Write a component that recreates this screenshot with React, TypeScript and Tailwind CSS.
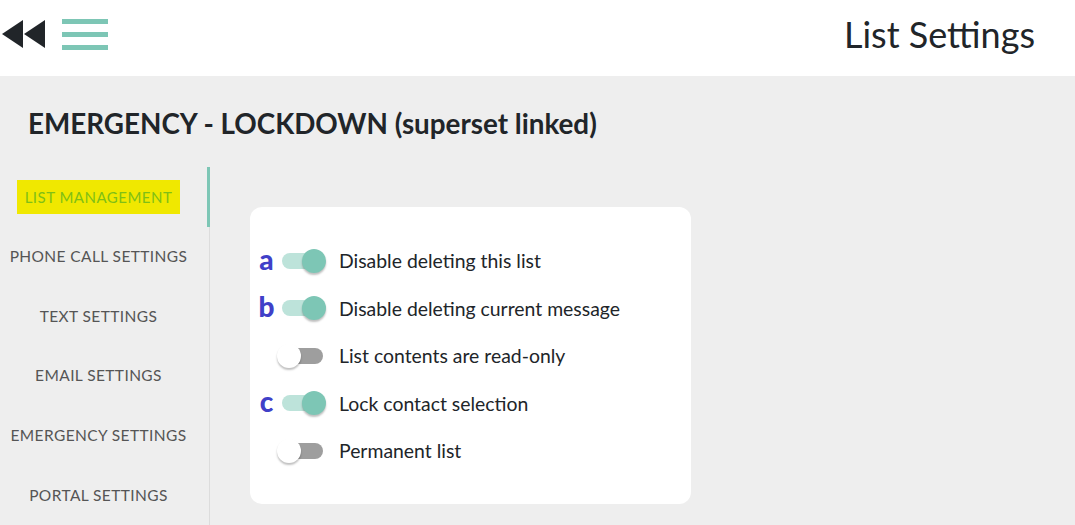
import React from "react";

const font = { fontFamily: "Lato, 'Noto Sans', sans-serif" };

function Switch({ on }: { on: boolean }) {
  return (
    <div className="relative w-[50px] h-[24px] shrink-0">
      <div
        className={
          "absolute left-[5px] top-[4px] w-[41px] h-[16px] rounded-full " +
          (on ? "bg-[#bde3da]" : "bg-[#9e9e9e]")
        }
      />
      <div
        className={
          "absolute top-0 w-[24px] h-[24px] rounded-full shadow-[0_2px_2px_rgba(0,0,0,0.25)] " +
          (on ? "left-[25px] bg-[#7dc6b5]" : "left-0 bg-white")
        }
      />
    </div>
  );
}

const rows: { letter: string; on: boolean; label: string }[] = [
  { letter: "a", on: true, label: "Disable deleting this list" },
  { letter: "b", on: true, label: "Disable deleting current message" },
  { letter: "", on: false, label: "List contents are read-only" },
  { letter: "c", on: true, label: "Lock contact selection" },
  { letter: "", on: false, label: "Permanent list" },
];

const nav = [
  "PHONE CALL SETTINGS",
  "TEXT SETTINGS",
  "EMAIL SETTINGS",
  "EMERGENCY SETTINGS",
  "PORTAL SETTINGS",
];

export default function App() {
  return (
    <div className="w-[1075px] h-[525px] overflow-hidden bg-[#eeeeee] flex flex-col" style={font}>
      <header className="h-[76px] bg-white flex items-center justify-between pl-[2px] pr-[40px] pb-[8px] shrink-0">
        <div className="flex items-center gap-[17px]">
          <svg width="43" height="28" viewBox="0 0 43 28">
            <polygon points="0,14 21,0 21,28" fill="#212529" />
            <polygon points="22,14 43,0 43,28" fill="#212529" />
          </svg>
          <div className="flex flex-col gap-[8px] w-[46px]">
            <div className="h-[5px] bg-[#7dc6b5]" />
            <div className="h-[5px] bg-[#7dc6b5]" />
            <div className="h-[5px] bg-[#7dc6b5]" />
          </div>
        </div>
        <h1 className="text-[36px] text-[#212529] leading-none">List Settings</h1>
      </header>
      <div className="h-[91px] flex items-center pl-[28px] shrink-0">
        <h2 className="text-[27.8px] font-bold text-[#212529] leading-none pt-[4px]">
          EMERGENCY - LOCKDOWN (superset linked)
        </h2>
      </div>
      <div className="flex flex-1 min-h-0">
        <nav className="w-[210px] border-r border-[#dcdcdc] flex flex-col shrink-0">
          <div className="h-[60px] flex items-center justify-center relative">
            <span className="bg-[#f0e800] px-[8px] py-[6px] text-[15px] tracking-[0.5px] text-[#7fbf16] ml-[-12px]">
              LIST MANAGEMENT
            </span>
            <div className="absolute right-[-1px] top-0 w-[3px] h-[60px] bg-[#7dc6b5]" />
          </div>
          {nav.map((n) => (
            <div key={n} className="h-[60px] flex items-center justify-center text-[15.5px] tracking-[0.4px] text-[#555555] pr-[12px]">
              {n}
            </div>
          ))}
        </nav>
        <div className="pl-[40px] pt-[40px]">
          <div className="w-[441px] h-[297px] bg-white rounded-[12px] pl-[6px] pt-[30px]">
            {rows.map((r) => (
              <div key={r.label} className="h-[47.5px] flex items-center">
                <span className="w-[21px] text-center text-[28px] font-black text-[#4040c8] leading-none pb-[4px]">
                  {r.letter}
                </span>
                <Switch on={r.on} />
                <span className="ml-[12px] text-[19.4px] text-[#212529]">{r.label}</span>
              </div>
            ))}
          </div>
        </div>
      </div>
    </div>
  );
}
